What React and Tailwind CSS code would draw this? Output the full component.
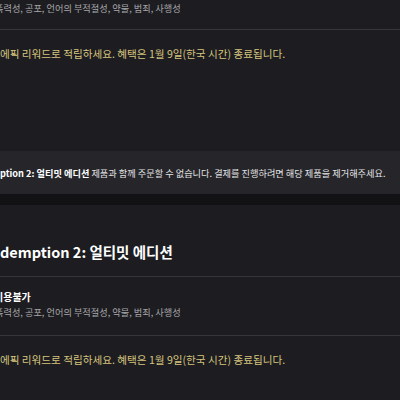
export default function App() {
  const font = { fontFamily: '"Noto Sans CJK KR", "Noto Sans", sans-serif' };
  return (
    <div
      className="w-[400px] h-[400px] overflow-hidden bg-[#1d1d21] text-white"
      style={font}
    >
      {/* block 1 tail */}
      <div className="h-[30px] border-b border-[#35353a] flex items-start">
        <p className="-ml-[5px] mt-[1px] text-[9.2px] leading-[14px] text-[#a7a7ab] whitespace-nowrap">
          폭력성, 공포, 언어의 부적절성, 약물, 범죄, 사행성
        </p>
      </div>
      <div className="pt-[16px]">
        <p className="text-[10.6px] leading-[16px] text-[#d6c47e] whitespace-nowrap">
          에픽 리워드로 적립하세요. 혜택은 1월 9일(한국 시간) 종료됩니다.
        </p>
      </div>

      {/* warning panel */}
      <div className="mt-[89px] h-[43px] bg-[#26262a] flex items-center">
        <p className="text-[9.2px] leading-[14px] text-[#e4e4e6] whitespace-nowrap">
          <span className="font-bold text-white">ption 2: 얼티밋 에디션</span> 제품과 함께 주문할 수 없습니다. 결제를 진행하려면 해당 제품을 제거해주세요.
        </p>
      </div>
      <div className="h-[11px] bg-[#121215]" />

      {/* block 2 */}
      <div className="pt-[36px] h-[72px] border-b border-[#35353a]">
        <h2 className="text-[14.5px] leading-[22px] font-bold whitespace-nowrap">
          demption 2: 얼티밋 에디션
        </h2>
      </div>
      <div className="h-[59px] border-b border-[#35353a] pt-[12px]">
        <p className="-ml-[6px] text-[10px] leading-[16px] font-bold whitespace-nowrap">이용불가</p>
        <p className="-ml-[5px] text-[9.2px] leading-[14px] text-[#a7a7ab] whitespace-nowrap">
          폭력성, 공포, 언어의 부적절성, 약물, 범죄, 사행성
        </p>
      </div>
      <div className="pt-[16px]">
        <p className="text-[10.6px] leading-[16px] text-[#d6c47e] whitespace-nowrap">
          에픽 리워드로 적립하세요. 혜택은 1월 9일(한국 시간) 종료됩니다.
        </p>
      </div>
    </div>
  );
}
